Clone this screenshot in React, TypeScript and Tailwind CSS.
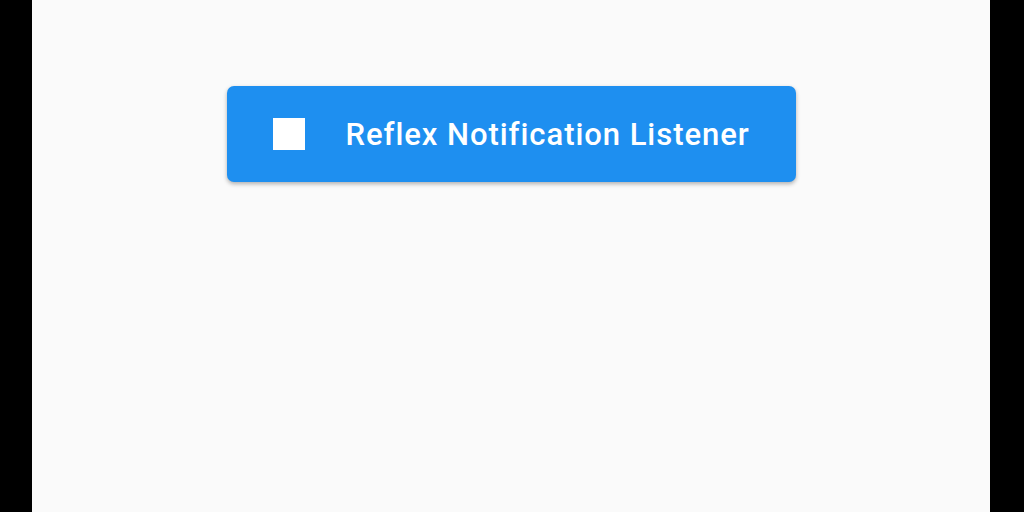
export default function App() {
  return (
    <div className="flex h-[512px] w-[1024px] bg-black" style={{ fontFamily: 'Roboto, "Noto Sans", sans-serif' }}>
      <div className="w-[32px] shrink-0 bg-black" />
      <div className="flex w-[958px] shrink-0 flex-col items-center bg-[#fafafa] pt-[86px]">
        <div className="flex h-[96px] w-[569px] items-center rounded-[7px] bg-[#1e8ff0] pl-[46px] shadow-[0_2px_4px_rgba(0,0,0,0.3)]">
          <div className="h-[32px] w-[32px] shrink-0 bg-white" />
          <span className="ml-[41px] whitespace-nowrap text-[31px] font-medium leading-none tracking-[0.95px] text-white">Reflex Notification Listener</span>
        </div>
      </div>
      <div className="flex-1 bg-black" />
    </div>
  );
}
